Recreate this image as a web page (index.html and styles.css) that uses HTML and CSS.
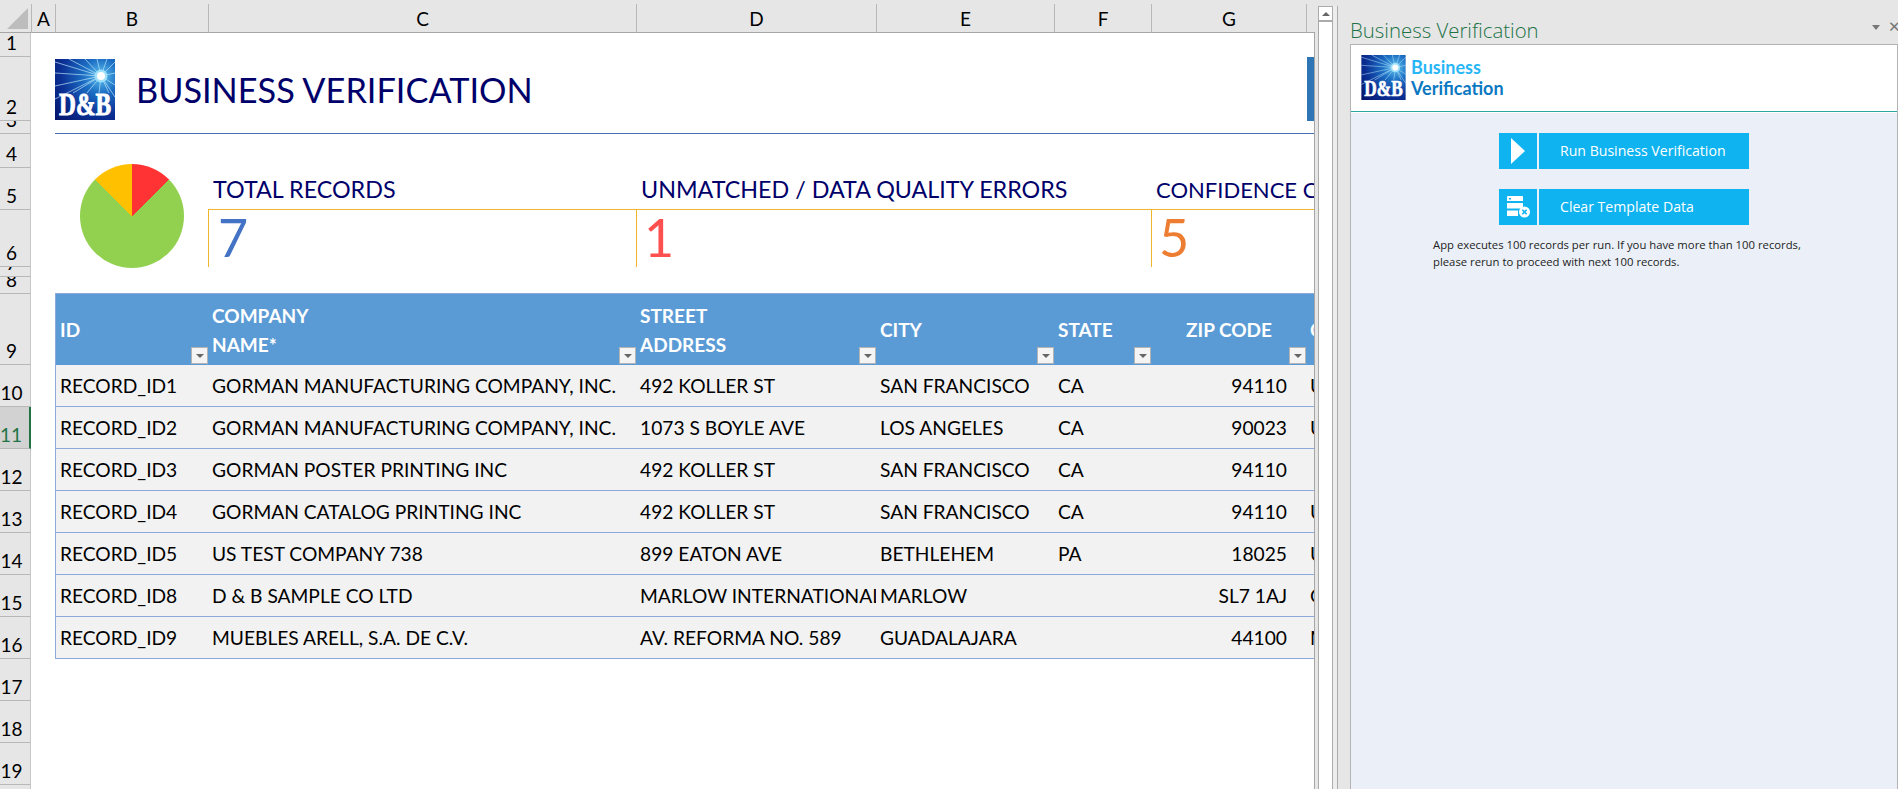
FILE: index.html
```html
<!DOCTYPE html>
<html>
<head>
    <meta charset="UTF-8">
    <title>Business Verification</title>
    <link rel="stylesheet" href="styles.css">
</head>
<body>

    <svg class="defs" width="0" height="0">
        <defs>
            <radialGradient id="logoSky" gradientUnits="userSpaceOnUse" cx="46" cy="17" r="62">
                <stop offset="0" stop-color="#5fc4f0"/>
                <stop offset="0.28" stop-color="#1c6fc4"/>
                <stop offset="0.65" stop-color="#0b2f94"/>
                <stop offset="1" stop-color="#04146a"/>
            </radialGradient>
            <g id="dnbLogo">
                <rect width="60" height="61" fill="url(#logoSky)"/>
                <g stroke="#bfe6fb" stroke-width="0.8" opacity="0.85">
                    <line x1="46" y1="17" x2="0" y2="3"/>
                    <line x1="46" y1="17" x2="0" y2="14"/>
                    <line x1="46" y1="17" x2="0" y2="27"/>
                    <line x1="46" y1="17" x2="0" y2="40"/>
                    <line x1="46" y1="17" x2="14" y2="0"/>
                    <line x1="46" y1="17" x2="30" y2="0"/>
                    <line x1="46" y1="17" x2="42" y2="0"/>
                    <line x1="46" y1="17" x2="52" y2="0"/>
                    <line x1="46" y1="17" x2="60" y2="3"/>
                    <line x1="46" y1="17" x2="60" y2="14"/>
                    <line x1="46" y1="17" x2="60" y2="26"/>
                    <line x1="46" y1="17" x2="60" y2="38"/>
                    <line x1="46" y1="17" x2="54" y2="34"/>
                    <line x1="46" y1="17" x2="44" y2="34"/>
                    <line x1="46" y1="17" x2="32" y2="34"/>
                    <line x1="46" y1="17" x2="18" y2="34"/>
                </g>
                <circle cx="46" cy="17" r="6.5" fill="#9fe0fa"/>
                <circle cx="46" cy="17" r="4" fill="#fff"/>
                <text class="logo-text" x="4" y="56" textLength="52" lengthAdjust="spacingAndGlyphs">D&amp;B</text>
            </g>
        </defs>
    </svg>

    <div class="sheet">
        <div class="canvas"></div>

        <div class="corner"><span class="corner-mark"></span></div>
        <div class="col-head">A</div>
        <div class="col-head">B</div>
        <div class="col-head">C</div>
        <div class="col-head">D</div>
        <div class="col-head">E</div>
        <div class="col-head">F</div>
        <div class="col-head">G</div>
        <div class="col-head"></div>

        <div class="row-head r1">1</div>
        <div class="row-head r2">2</div>
        <div class="row-head r3">3</div>
        <div class="row-head r4">4</div>
        <div class="row-head r5">5</div>
        <div class="row-head r6">6</div>
        <div class="row-head r7">7</div>
        <div class="row-head r8">8</div>
        <div class="row-head r9">9</div>
        <div class="row-head r10">10</div>
        <div class="row-head r11 selected">11</div>
        <div class="row-head r12">12</div>
        <div class="row-head r13">13</div>
        <div class="row-head r14">14</div>
        <div class="row-head r15">15</div>
        <div class="row-head r16">16</div>
        <div class="row-head r17">17</div>
        <div class="row-head r18">18</div>
        <div class="row-head r19">19</div>
        <div class="row-head r20">20</div>

        <svg class="logo" viewBox="0 0 60 61"><use href="#dnbLogo"/></svg>
        <div class="title">BUSINESS VERIFICATION</div>
        <div class="title-tab"></div>
        <div class="title-rule"></div>

        <div class="pie"></div>

        <div class="kpi-label kpi-a">TOTAL RECORDS</div>
        <div class="kpi-label kpi-b">UNMATCHED / DATA QUALITY ERRORS</div>
        <div class="kpi-label kpi-c">CONFIDENCE CODE 7+</div>
        <div class="kpi-value kpi-a blue">7</div>
        <div class="kpi-value kpi-b red">1</div>
        <div class="kpi-value kpi-c orange">5</div>

        <div class="records-wrap">
            <table class="records">
                <colgroup>
                    <col class="w-id"><col class="w-company"><col class="w-street"><col class="w-city"><col class="w-state"><col class="w-zip"><col class="w-country">
                </colgroup>
                <thead>
                    <tr>
                        <th>ID<span class="filter"></span></th>
                        <th>COMPANY<br>NAME*<span class="filter"></span></th>
                        <th>STREET<br>ADDRESS<span class="filter"></span></th>
                        <th>CITY<span class="filter"></span></th>
                        <th>STATE<span class="filter"></span></th>
                        <th class="zip">ZIP CODE<span class="filter"></span></th>
                        <th>COUNTRY</th>
                    </tr>
                </thead>
                <tbody>
                    <tr><td>RECORD_ID1</td><td>GORMAN MANUFACTURING COMPANY, INC.</td><td>492 KOLLER ST</td><td>SAN FRANCISCO</td><td>CA</td><td class="zip">94110</td><td>US</td></tr>
                    <tr><td>RECORD_ID2</td><td>GORMAN MANUFACTURING COMPANY, INC.</td><td>1073 S BOYLE AVE</td><td>LOS ANGELES</td><td>CA</td><td class="zip">90023</td><td>US</td></tr>
                    <tr><td>RECORD_ID3</td><td>GORMAN POSTER PRINTING INC</td><td>492 KOLLER ST</td><td>SAN FRANCISCO</td><td>CA</td><td class="zip">94110</td><td></td></tr>
                    <tr><td>RECORD_ID4</td><td>GORMAN CATALOG PRINTING INC</td><td>492 KOLLER ST</td><td>SAN FRANCISCO</td><td>CA</td><td class="zip">94110</td><td>US</td></tr>
                    <tr><td>RECORD_ID5</td><td>US TEST COMPANY 738</td><td>899 EATON AVE</td><td>BETHLEHEM</td><td>PA</td><td class="zip">18025</td><td>US</td></tr>
                    <tr><td>RECORD_ID8</td><td>D &amp; B SAMPLE CO LTD</td><td>MARLOW INTERNATIONAL</td><td>MARLOW</td><td></td><td class="zip">SL7 1AJ</td><td>GB</td></tr>
                    <tr><td>RECORD_ID9</td><td>MUEBLES ARELL, S.A. DE C.V.</td><td>AV. REFORMA NO. 589</td><td>GUADALAJARA</td><td></td><td class="zip">44100</td><td>MX</td></tr>
                </tbody>
            </table>
        </div>
    </div>

    <div class="vscroll">
        <div class="vscroll-btn"><span class="vscroll-arrow"></span></div>
    </div>
    <div class="splitter"></div>

    <div class="side">
        <div class="side-title">
            <span>Business Verification</span>
            <span class="side-caret"></span>
            <span class="side-close">&#10005;</span>
        </div>
        <div class="pane">
            <div class="pane-head">
                <svg class="pane-logo" viewBox="0 0 60 61"><use href="#dnbLogo"/></svg>
                <div class="pane-name">
                    <div class="name-a">Business</div>
                    <div class="name-b">Verification</div>
                </div>
            </div>
            <div class="pane-body">
                <div class="action">
                    <div class="action-icon">
                        <svg width="14" height="26" viewBox="0 0 14 26"><path d="M0 0 L14 13 L0 26 Z" fill="#fff"/></svg>
                    </div>
                    <div class="action-text">Run Business Verification</div>
                </div>
                <div class="action">
                    <div class="action-icon">
                        <svg width="23" height="22" viewBox="0 0 23 22">
                            <path d="M0 1 a1 1 0 0 1 1 -1 h14 a1 1 0 0 1 1 1 v4 h-16 Z M2 2 v1.5 h2 v-1.5 Z" fill="#fff" fill-rule="evenodd"/>
                            <rect x="0" y="7" width="16" height="5.5" fill="#fff"/>
                            <rect x="0" y="14.5" width="11" height="5.5" fill="#fff"/>
                            <circle cx="17.5" cy="16" r="5.5" fill="#fff"/>
                            <path d="M15.3 13.8 L19.7 18.2 M19.7 13.8 L15.3 18.2" stroke="#0fb3ef" stroke-width="1.6"/>
                        </svg>
                    </div>
                    <div class="action-text">Clear Template Data</div>
                </div>
                <p class="note">App executes 100 records per run. If you have more than 100 records,<br>please rerun to proceed with next 100 records.</p>
            </div>
        </div>
    </div>

</body>
</html>
```

FILE: styles.css
```css
* {
    box-sizing: border-box;
}

html, body {
    margin: 0;
    height: 789px;
    overflow: hidden;
}

body {
    display: flex;
    width: 1898px;
    background: #e6e6e6;
    font-family: "Lato", "Liberation Sans", sans-serif;
    color: #000;
}

.defs {
    position: absolute;
}

.logo-text {
    font-family: "Liberation Serif", serif;
    font-weight: bold;
    font-size: 31px;
    fill: #fff;
    stroke: #fff;
    stroke-width: 0.9px;
}

/* worksheet */

.sheet {
    flex: none;
    width: 1315px;
    height: 789px;
    overflow: hidden;
    display: grid;
    grid-template-columns: 31px 24px 153px 428px 240px 178px 97px 155px 9px;
    grid-template-rows: 4px 29px 24px 64px 13px 34px 42px 57px 10px 17px 71px repeat(11, 42px);
}

.canvas {
    grid-column: 2 / -1;
    grid-row: 3 / -1;
    background: #fff;
    border-right: 1px solid #a6a6a6;
}

.corner {
    grid-column: 1;
    grid-row: 2;
    display: flex;
    justify-content: flex-end;
    align-items: flex-end;
    padding: 0 3px 3px 0;
    border-bottom: 1px solid #a6a6a6;
}

.corner-mark {
    width: 21px;
    height: 21px;
    background: #bdbdbd;
    clip-path: polygon(100% 0, 100% 100%, 0 100%);
}

.col-head {
    grid-row: 2;
    display: flex;
    align-items: center;
    justify-content: center;
    font-size: 19px;
    border-left: 1px solid #b8b8b8;
    border-bottom: 1px solid #a6a6a6;
}

.row-head {
    grid-column: 1;
    display: flex;
    align-items: flex-end;
    justify-content: center;
    overflow: hidden;
    padding: 0 7px 2px 0;
    font-size: 19px;
    line-height: 22px;
    border-bottom: 1px solid #b8b8b8;
    border-right: 1px solid #c8c8c8;
}

.row-head.selected {
    background: #d2d2d2;
    color: #217346;
    border-right: 2px solid #217346;
}

.r1 { grid-row: 3; }
.r2 { grid-row: 4; }
.r3 { grid-row: 5; }
.r4 { grid-row: 6; }
.r5 { grid-row: 7; }
.r6 { grid-row: 8; }
.r7 { grid-row: 9; }
.r8 { grid-row: 10; }
.r9 { grid-row: 11; }
.r10 { grid-row: 12; }
.r11 { grid-row: 13; }
.r12 { grid-row: 14; }
.r13 { grid-row: 15; }
.r14 { grid-row: 16; }
.r15 { grid-row: 17; }
.r16 { grid-row: 18; }
.r17 { grid-row: 19; }
.r18 { grid-row: 20; }
.r19 { grid-row: 21; }
.r20 { grid-row: 22; }

.logo {
    grid-column: 3;
    grid-row: 4;
    width: 60px;
    height: 61px;
    margin-top: 2px;
}

.title {
    grid-column: 3 / 5;
    grid-row: 4;
    align-self: center;
    margin-left: 81px;
    font-size: 34.3px;
    color: #00006b;
    white-space: nowrap;
}

.title-tab {
    grid-column: 8 / 10;
    grid-row: 4;
    justify-self: end;
    width: 7px;
    margin-right: 1px;
    background: #2e75b6;
}

.title-rule {
    grid-column: 3 / -1;
    grid-row: 5;
    align-self: end;
    height: 1px;
    margin-right: 1px;
    background: #4a6fb5;
}

.pie {
    grid-column: 3;
    grid-row: 6 / 10;
    justify-self: center;
    width: 104px;
    height: 104px;
    margin-top: 30px;
    border-radius: 50%;
    background: conic-gradient(#ff3333 0 45deg, #92d050 45deg 315deg, #ffc000 315deg 360deg);
}

.kpi-label {
    grid-row: 7;
    display: flex;
    align-items: center;
    padding: 1px 0 0 5px;
    overflow: hidden;
    font-size: 23.3px;
    color: #00006b;
    white-space: nowrap;
    border-bottom: 1px solid #f0b52a;
}

.kpi-label.kpi-c {
    font-size: 22px;
}

.kpi-value {
    grid-row: 8;
    padding: 0 0 0 9px;
    overflow: hidden;
    font-size: 52px;
    line-height: 55px;
    border-left: 1px solid #f0b52a;
}

.kpi-a { grid-column: 4; }
.kpi-b { grid-column: 5 / 8; }
.kpi-c { grid-column: 8 / 10; margin-right: 1px; }

.blue { color: #4472c4; }
.red { color: #ff5050; padding-left: 7px; }
.orange { color: #ed7d31; padding-left: 7px; }

.records-wrap {
    grid-column: 3 / -1;
    grid-row: 11 / 19;
    overflow: hidden;
    margin: -1px 1px 0 0;
}

.records {
    table-layout: fixed;
    width: 1260px;
    border-collapse: separate;
    border-spacing: 0;
    border-left: 1px solid #8eaadb;
    font-size: 19.2px;
}

.w-id { width: 152px; }
.w-company { width: 428px; }
.w-street { width: 240px; }
.w-city { width: 178px; }
.w-state { width: 97px; }
.w-zip { width: 155px; }
.w-country { width: 9px; }

.records th {
    position: relative;
    height: 72px;
    padding: 0 0 0 4px;
    overflow: hidden;
    background: #5b9bd5;
    border-top: 1px solid #8eaadb;
    color: #fff;
    font-size: 19px;
    font-weight: bold;
    line-height: 29px;
    text-align: left;
    white-space: nowrap;
}

.records td {
    height: 42px;
    padding: 0 0 0 4px;
    overflow: hidden;
    background: #f2f2f2;
    border-bottom: 1px solid #8eaadb;
    white-space: nowrap;
}

.records th.zip {
    padding-right: 34px;
    text-align: right;
}

.records td.zip {
    padding-right: 19px;
    text-align: right;
}

.filter {
    position: absolute;
    right: 0;
    bottom: 1px;
    width: 17px;
    height: 17px;
    background: #f4f4f4;
    border: 1px solid #b4b4b4;
}

.filter::after {
    content: "";
    position: absolute;
    left: 4px;
    top: 6px;
    border: 4px solid transparent;
    border-top: 4px solid #666;
    border-bottom: 0;
}

/* scrollbar between sheet and pane */

.vscroll {
    flex: none;
    width: 15px;
    margin: 6px 0 0 3px;
    background: #fff;
    border: 1px solid #ababab;
    border-bottom: 0;
}

.vscroll-btn {
    height: 15px;
    border-bottom: 2px solid #ababab;
    display: flex;
    align-items: center;
    justify-content: center;
}

.vscroll-arrow {
    border: 4px solid transparent;
    border-bottom: 4px solid #666;
    border-top: 0;
}

.splitter {
    flex: none;
    width: 5px;
    margin-top: 6px;
    background: #ededed;
    border-right: 1px solid #ababab;
}

/* task pane */

.side {
    flex: none;
    display: flex;
    flex-direction: column;
    width: 560px;
    padding-left: 12px;
}

.side-title {
    flex: none;
    position: relative;
    height: 44px;
    padding-top: 17px;
    font-family: "Open Sans", sans-serif;
    font-weight: 300;
    font-size: 20.4px;
    line-height: 26px;
    color: #217346;
}

.side-caret {
    position: absolute;
    left: 522px;
    top: 25px;
    border: 4.5px solid transparent;
    border-top: 5px solid #777;
    border-bottom: 0;
}

.side-close {
    position: absolute;
    left: 538px;
    top: 14px;
    font-family: "DejaVu Sans", sans-serif;
    font-size: 15px;
    color: #777;
}

.pane {
    flex: 1;
    display: flex;
    flex-direction: column;
    width: 548px;
    border: 1px solid #b4b4b4;
    border-bottom: 0;
}

.pane-head {
    flex: none;
    display: flex;
    height: 67px;
    padding: 10px 0 0 10px;
    background: #fff;
    border-bottom: 1px solid #2aa5a0;
}

.pane-logo {
    width: 45px;
    height: 45px;
}

.pane-name {
    margin-left: 5px;
    font-weight: bold;
    font-size: 18px;
    line-height: 21px;
    padding-top: 2px;
}

.name-a {
    color: #29b6f6;
}

.name-b {
    color: #0b78c2;
}

.pane-body {
    flex: 1;
    padding: 20px 0 0 148px;
    background: #ebf0f8;
    border-top: 1px solid #fff;
}

.action {
    display: flex;
    gap: 2px;
    height: 36px;
    margin-bottom: 20px;
    color: #fff;
}

.action-icon {
    display: flex;
    align-items: center;
    justify-content: center;
    width: 38px;
    background: #0fb3ef;
}

.action-text {
    display: flex;
    align-items: center;
    width: 210px;
    padding: 0 0 2px 21px;
    background: #0fb3ef;
    font-family: "Open Sans", sans-serif;
    font-size: 14.1px;
}

.note {
    margin: -9px 0 0 -66px;
    font-family: "Open Sans", sans-serif;
    font-size: 11.3px;
    line-height: 17px;
    color: #222;
    white-space: nowrap;
}
```
